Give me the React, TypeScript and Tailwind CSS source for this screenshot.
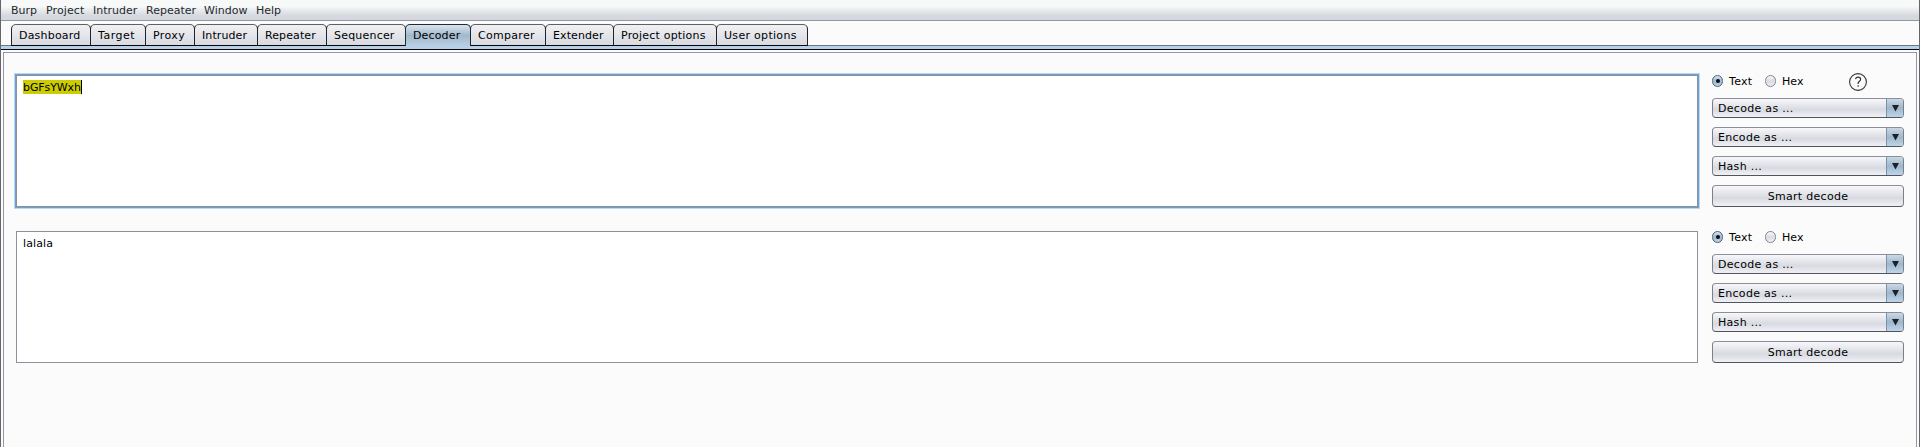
import { useState } from "react";

const menus = [
  { label: "Burp", w: "w-[35px]" },
  { label: "Project", w: "w-[47px] tracking-[0.1px]" },
  { label: "Intruder", w: "w-[53px]" },
  { label: "Repeater", w: "w-[58px]" },
  { label: "Window", w: "w-[52px]" },
  { label: "Help", w: "w-[40px]" },
];

const tabs = [
  { label: "Dashboard", w: "w-[80px] tracking-[0.2px]" },
  { label: "Target", w: "w-[56px] tracking-[0.5px]" },
  { label: "Proxy", w: "w-[50px] tracking-[0.4px]" },
  { label: "Intruder", w: "w-[64px] tracking-[0.1px]" },
  { label: "Repeater", w: "w-[70px] tracking-[0.1px]" },
  { label: "Sequencer", w: "w-[80px] tracking-[0.2px]" },
  { label: "Decoder", w: "w-[66px] tracking-[0.15px]" },
  { label: "Comparer", w: "w-[76px] tracking-[0.3px]" },
  { label: "Extender", w: "w-[69px] tracking-[0.1px]" },
  { label: "Project options", w: "w-[104px] tracking-[0.2px]" },
  { label: "User options", w: "w-[92px] tracking-[0.3px]" },
];

function Radio({ checked }: { checked: boolean }) {
  return (
    <span
      className={`flex h-[12px] w-[11px] shrink-0 items-center justify-center rounded-full border ${
        checked
          ? "border-[#4a5f75] bg-linear-to-b from-[#dbe6f0] via-[#9db6cc] to-[#bcd4e8]"
          : "border-[#80848c] bg-linear-to-b from-[#fafafc] via-[#d9dbe2] to-[#f0f1f5]"
      }`}
    >
      {checked && <span className="size-[4px] rounded-full bg-[#0b0d12]" />}
    </span>
  );
}

function Combo({ label }: { label: string }) {
  return (
    <button className="mb-[9px] flex h-[20px] w-[192px] overflow-hidden rounded-[4px] border border-[#7a7f89] border-t-[#8b8f99] border-b-[#4f545d] bg-linear-to-b from-[#f8f8fb] via-[#d8dae1] via-60% to-[#f0f1f6] text-left">
      <span className="flex-1 pl-[5px] leading-[19px] tracking-[0.3px]">{label}</span>
      <span className="flex h-full w-[17px] items-center justify-center border-l border-[#7b93a9] bg-linear-to-b from-[#c9d8e6] via-[#a0b7cb] via-50% to-[#bdd5ea]">
        <svg width="7" height="7" viewBox="0 0 7 7">
          <path d="M0 0h7L3.5 6.500z" fill="#1d2024" />
        </svg>
      </span>
    </button>
  );
}

function Controls({ help }: { help: boolean }) {
  return (
    <div className="w-[192px]">
      <div className="flex h-[23px] items-start">
        <div className="flex h-[12px] items-center">
          <Radio checked />
          <span className="ml-[6px] w-[36px] pt-px leading-[13px] tracking-[0.3px]">Text</span>
          <Radio checked={false} />
          <span className="ml-[6px] pt-px leading-[13px] tracking-[0.1px]">Hex</span>
        </div>
        {help && (
          <svg className="mt-[-2px] mr-[37px] ml-auto" width="18" height="18" viewBox="0 0 18 18" fill="none" stroke="#333">
            <circle cx="9" cy="9" r="8.4" strokeWidth="1.1" />
            <path d="M6.500 6.100c.3-1.300 1.300-1.900 2.600-1.900 1.500 0 2.500.8 2.500 2.100 0 1.900-2.500 2-2.500 4.100v.5M9.100 12.200v1.500" strokeWidth="1.200" />
          </svg>
        )}
      </div>
      <Combo label="Decode as ..." />
      <Combo label="Encode as ..." />
      <Combo label="Hash ..." />
      <button className="block h-[22px] w-[192px] rounded-[4px] border border-[#7a7f89] border-t-[#8b8f99] border-b-[#4f545d] bg-linear-to-b from-[#f8f8fb] via-[#d8dae1] via-60% to-[#f0f1f6] leading-[21px] tracking-[0.3px]">
        Smart decode
      </button>
    </div>
  );
}

export default function App() {
  const [active, setActive] = useState("Decoder");
  return (
    <div className="flex h-[447px] w-[1920px] flex-col overflow-hidden border-x border-[#66666a] bg-[#fbfbfb] font-['DejaVu_Sans',sans-serif] text-[11px] text-black">
      <nav className="flex h-[21px] shrink-0 border-b border-[#9297a1] bg-linear-to-b from-[#f7faf9] from-30% to-[#d4d7dd] to-80% pl-[10px] leading-[21px] text-[#26282c]">
        {menus.map((m) => (
          <span key={m.label} className={m.w}>
            {m.label}
          </span>
        ))}
      </nav>
      <div className="relative z-10 mb-[-1px] flex h-[25px] shrink-0 items-end pl-[10px]">
        {tabs.map((t) => (
          <button
            key={t.label}
            onClick={() => setActive(t.label)}
            className={`mr-[-1px] h-[22px] shrink-0 rounded-t-[5px] border pl-[7px] text-left leading-[21px] whitespace-nowrap ${t.w} ${
              t.label === active
                ? "border-b-0 border-[#1d2b3f] bg-linear-to-b from-[#dbe4ec] via-[#a2b8cc] via-50% to-[#b8cfe5]"
                : "border-x-[#20222c] border-t-[#5e6068] border-b-[#05070c] bg-linear-to-b from-[#f1f1f4] to-[#d8dae1]"
            }`}
          >
            {t.label}
          </button>
        ))}
      </div>
      <div className="h-[5px] shrink-0 border-t border-b border-t-[#65788c] border-b-[#05070c] bg-[#b8cfe5]" />
      <main className="mx-[2px] mt-[2px] flex flex-1 flex-col border-x border-t border-[#9297a1] pt-[22px] pl-[12px]">
        <section className="flex h-[156px] shrink-0">
          <div className="h-[132px] w-[1682px] border border-[#8c919d] bg-white pt-[4px] pl-[6px] shadow-[0_0_0_1px_#6d9fcf,0_0_0_2px_#b9d8f2]">
            <span className="inline-block h-[14px] border-r border-black bg-[#cccc00] align-top leading-[15px] tracking-[-0.1px]">bGFsYWxh</span>
          </div>
          <div className="ml-[14px]">
            <Controls help />
          </div>
        </section>
        <section className="flex h-[156px] shrink-0">
          <div className="h-[132px] w-[1682px] border border-[#8c919d] bg-white pt-[4px] pl-[6px] leading-[15px] tracking-[0.1px]">lalala</div>
          <div className="ml-[14px]">
            <Controls help={false} />
          </div>
        </section>
      </main>
    </div>
  );
}
